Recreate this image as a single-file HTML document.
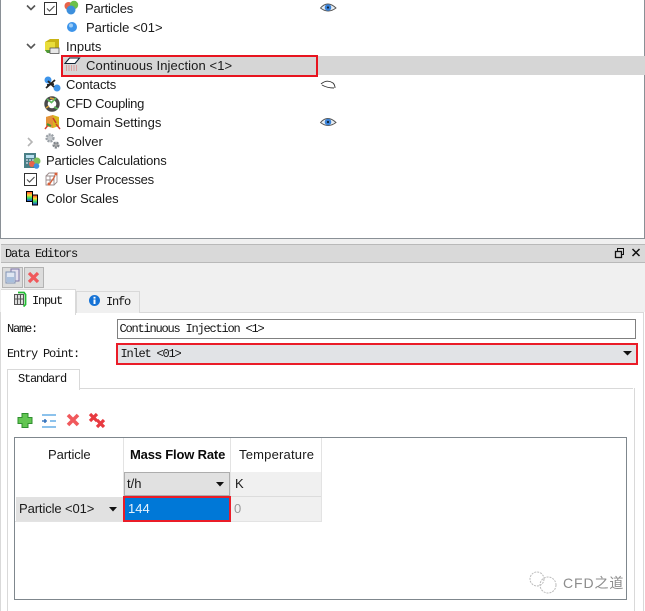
<!DOCTYPE html>
<html><head><meta charset="utf-8"><style>
html,body{margin:0;padding:0;background:#fff}
#r{position:relative;width:645px;height:611px;overflow:hidden;background:#fff;font-family:"Liberation Sans","Noto Sans CJK SC",sans-serif;font-size:13px;color:#1a1a1a}
#r div,#r svg{position:absolute}
.t{white-space:nowrap;line-height:16px}
.m{white-space:nowrap;line-height:14px;font-family:"Liberation Mono","Noto Sans CJK SC",monospace;font-size:12px;letter-spacing:-1.2px;color:#111}
</style></head><body><div id="r">
<!-- tree panel -->
<div style="left:0;top:0;width:1px;height:239px;background:#8a9096"></div>
<div style="left:0;top:238px;width:645px;height:1px;background:#8a9096"></div>
<div style="left:644px;top:0;width:1px;height:239px;background:#8a9096"></div>
<div style="left:62px;top:56px;width:583px;height:19px;background:#d6d6d6"></div>
<div style="left:61px;top:55px;width:253px;height:18px;border:2px solid #e8141f"></div>

<svg style="left:0;top:0" width="345" height="210" viewBox="0 0 345 210">
<defs><linearGradient id="g" x1="0" y1="0" x2="0" y2="1"><stop offset="0" stop-color="#f33"/><stop offset=".35" stop-color="#fd3"/><stop offset=".65" stop-color="#3d6"/><stop offset="1" stop-color="#23e"/></linearGradient></defs>
<g fill="none" stroke="#555" stroke-width="1.600">
<path d="M27 5.500l4 4 4-4M27 44l4 4 4-4"/>
</g>
<path d="M28 138l4 4-4 4" fill="none" stroke="#b5b5b5" stroke-width="1.600"/>
<rect x="44.500" y="2.500" width="12" height="12" fill="#fff" stroke="#333"/>
<path d="M47 8.500l2.500 2.500 5-5" fill="none" stroke="#555" stroke-width="1.200"/>
<rect x="24.500" y="173.500" width="12" height="12" fill="#fff" stroke="#333"/>
<path d="M27 179.500l2.500 2.500 5-5" fill="none" stroke="#555" stroke-width="1.200"/>
<!-- Particles -->
<circle cx="68.500" cy="6" r="4" fill="#e8634a"/>
<circle cx="74" cy="5" r="4.200" fill="#6cc04a"/><circle cx="71" cy="10" r="4.500" fill="#3d8fdc"/>
<circle cx="72" cy="27" r="5" fill="#3d94ea"/><circle cx="71" cy="25.500" r="2" fill="#9ccdf7"/>
<!-- Inputs -->
<path d="M45 42l5-3h9v11h-14z" fill="#c9b414"/><path d="M45 42h10v9h-10z" fill="#e9dd3a"/>
<path d="M45 50h6v3h-4z" fill="#4f9a35"/><rect x="50" y="48" width="9" height="5.500" fill="#e8e8e8" stroke="#555" stroke-width=".8"/>
<!-- injection -->
<path d="M65 63.500l4.500-5.500h10l-4.500 5.500z" fill="#fff" stroke="#123" stroke-width="1.100"/>
<path d="M66 66h11M66 68h11M66 70h11" stroke="#d66" stroke-width="1" stroke-dasharray="1 1.500"/>
<!-- Contacts -->
<circle cx="48" cy="80" r="3.500" fill="#3d94ea"/><circle cx="57" cy="88" r="3.500" fill="#3d94ea"/>
<path d="M46 88l9-8M48 81l6 6M47 85l7-1" stroke="#222" stroke-width="1.800" fill="none"/>
<!-- CFD -->
<circle cx="52" cy="104" r="6" fill="none" stroke="#4a4a4a" stroke-width="3.400"/>
<path d="M47 99l5 4M54 107l4 2M56 98l-5 5" stroke="#5cb85c" stroke-width="1.600" fill="none"/>
<path d="M46 108l3-2M50 98l4 1" stroke="#d9a23b" stroke-width="1.500" fill="none"/>
<!-- Domain -->
<path d="M46 117l7-2 6 2v9l-6 2-7-2z" fill="#d7b71e"/><path d="M53 115v13l-7-2v-9z" fill="#e4923a"/>
<path d="M45 129l4-5M60 129l-4-5" stroke="#d6402f" stroke-width="1.500"/><path d="M47 124l4 2" stroke="#3c9a3c" stroke-width="2"/><path d="M53 118l3 5" stroke="#c83a2a" stroke-width="1.500"/>
<!-- Solver -->
<circle cx="50" cy="138" r="3.500" fill="#c4c8cc" stroke="#9aa0a6" stroke-width="2.200" stroke-dasharray="2 1"/>
<circle cx="56" cy="145" r="2.500" fill="#aaa" stroke="#7f858b" stroke-width="2.200" stroke-dasharray="2 1"/>
<!-- Calc -->
<rect x="24" y="153" width="12" height="15" fill="#4a7f86"/><rect x="26" y="155" width="8" height="3" fill="#b8dff0"/>
<path d="M26 160h8M26 163h8" stroke="#dde" stroke-width="1.200" stroke-dasharray="2 1"/>
<circle cx="37" cy="161" r="3.500" fill="#7cc05a"/><circle cx="32" cy="164" r="3" fill="#e8634a"/><circle cx="36.500" cy="166" r="2.800" fill="#3d8fdc"/>
<!-- User -->
<g fill="none" stroke="#9a8a8a" stroke-width=".9"><path d="M46 176h8v9h-8zM46 176l3-3h8l-3 3M54 185l3-3v-9M50 176v9M46 180h8"/></g>
<path d="M49 185l6-9" stroke="#d8603a" stroke-width="1.200"/><circle cx="56" cy="174" r="1.500" fill="#d8603a"/><circle cx="49" cy="184" r="1.500" fill="#d8603a"/>
<!-- Color scales -->
<rect x="26.500" y="191.500" width="6" height="10" fill="url(#g)" stroke="#000" stroke-width="1"/>
<rect x="32.500" y="195" width="5" height="10" fill="url(#g)" stroke="#000" stroke-width="1"/>
<!-- eyes -->
<path d="M320.500 8q7-8 15.500 0-8 6-15.500 0z" fill="#e8eef2" stroke="#555" stroke-width=".9"/><circle cx="328" cy="7.500" r="3.300" fill="#3a82d8"/><circle cx="328" cy="7.500" r="1.100" fill="#123"/>
<path d="M320.500 122.500q7-8 15.500 0-8 6-15.500 0z" fill="#e8eef2" stroke="#555" stroke-width=".9"/><circle cx="328" cy="122" r="3.300" fill="#3a82d8"/><circle cx="328" cy="122" r="1.100" fill="#123"/>
<path d="M321 84q6-5 12-1 2 2 2 5M322 85q5 3 12 3" fill="none" stroke="#333" stroke-width=".9"/>
</svg>

<div class="t" style="left:85px;top:1px;letter-spacing:-.2px">Particles</div>
<div class="t" style="left:86px;top:20px">Particle &lt;01&gt;</div>
<div class="t" style="left:66px;top:39px">Inputs</div>
<div class="t" style="left:86px;top:58px;letter-spacing:.1px">Continuous Injection &lt;1&gt;</div>
<div class="t" style="left:66px;top:77px;letter-spacing:-.15px">Contacts</div>
<div class="t" style="left:66px;top:96px;letter-spacing:-.3px">CFD Coupling</div>
<div class="t" style="left:66px;top:115px">Domain Settings</div>
<div class="t" style="left:66px;top:134px">Solver</div>
<div class="t" style="left:46px;top:153px;letter-spacing:-.17px">Particles Calculations</div>
<div class="t" style="left:65px;top:172px;letter-spacing:-.2px">User Processes</div>
<div class="t" style="left:46px;top:191px;letter-spacing:-.1px">Color Scales</div>

<!-- Data editors -->
<div style="left:0;top:239px;width:645px;height:73px;background:#f0f0f0"></div>
<div style="left:1px;top:244px;width:644px;height:17px;background:#d9d9d9;border-top:1px solid #b9b9b9;border-bottom:1px solid #b9b9b9"></div>
<div class="m" style="left:5px;top:247px">Data Editors</div>
<svg style="left:612px;top:245px" width="33" height="16"><rect x="5.500" y="3.500" width="6" height="6" fill="none" stroke="#111"/><rect x="3.500" y="6.500" width="6" height="6" fill="#d9d9d9" stroke="#111" stroke-width="1.300"/><path d="M20.500 4l7 7M27.500 4l-7 7" stroke="#111" stroke-width="1.500"/></svg>
<div style="left:2px;top:267px;width:19px;height:19px;background:#dcdcdc;border:1px solid #b3b3b3"></div>
<div style="left:24px;top:267px;width:18px;height:19px;background:#dcdcdc;border:1px solid #b3b3b3"></div>
<svg style="left:0;top:264px" width="50" height="26"><rect x="11" y="5" width="8" height="12" fill="#e4e0ee" stroke="#7d74a6"/><rect x="6" y="8" width="9" height="11" fill="#dfe6f2" stroke="#8094b5"/><rect x="7" y="13" width="7" height="5" fill="#a9bfdc"/><path d="M29 9l9 9M38 9l-9 9" stroke="#f0595c" stroke-width="3.200"/></svg>

<!-- tabs -->
<div style="left:0;top:312px;width:643px;height:1px;background:#d9d9d9"></div>
<div style="left:643px;top:312px;width:1px;height:299px;background:#d9d9d9"></div>
<div style="left:0;top:312px;width:1px;height:299px;background:#d9d9d9"></div>
<div style="left:76px;top:291px;width:62px;height:21px;background:#f0f0f0;border:1px solid #d9d9d9;border-bottom:none"></div>
<div style="left:1px;top:289px;width:74px;height:25px;background:#fff;border-top:1px solid #d9d9d9;border-right:1px solid #d9d9d9"></div>
<svg style="left:12px;top:291px" width="16" height="18"><rect x="2.500" y="3.500" width="9" height="10" fill="#ddd" stroke="#555"/><path d="M5.500 3.500v10M8.500 3.500v10M2.500 8h9" stroke="#555"/><path d="M6 1.500h6l1.500 2v10l-2 2" fill="none" stroke="#22bb33" stroke-width="1.800"/></svg>
<div class="m" style="left:32px;top:294px">Input</div>
<svg style="left:88px;top:294px" width="14" height="14"><circle cx="6.500" cy="6.500" r="5.500" fill="#1673d6"/><rect x="5.500" y="5.500" width="2" height="4.500" fill="#fff"/><rect x="5.500" y="2.800" width="2" height="1.800" fill="#fff"/></svg>
<div class="m" style="left:106px;top:295px">Info</div>

<div class="m" style="left:7px;top:322px">Name:</div>
<div style="left:117px;top:319px;width:517px;height:18px;border:1px solid #808080;background:#fff"></div>
<div class="m" style="left:119.500px;top:322px">Continuous Injection &lt;1&gt;</div>
<div class="m" style="left:7px;top:347px">Entry Point:</div>
<div style="left:116px;top:343px;width:518px;height:18px;border:2px solid #ea1c28;background:#e1e3e6"></div>
<div class="m" style="left:120.500px;top:347px">Inlet &lt;01&gt;</div>
<svg style="left:620px;top:348px" width="14" height="12"><path d="M3 3h9l-4.500 4.500z" fill="#111"/></svg>

<!-- Standard -->
<div style="left:7px;top:388px;width:626px;height:1px;background:#d9d9d9"></div>
<div style="left:7px;top:369px;width:71px;height:20px;background:#fff;border:1px solid #d9d9d9;border-bottom:none"></div>
<div class="m" style="left:18px;top:372px">Standard</div>
<div style="left:7px;top:388px;width:1px;height:223px;background:#d9d9d9"></div>
<div style="left:634px;top:388px;width:1px;height:223px;background:#d9d9d9"></div>

<!-- toolbar icons -->
<svg style="left:14px;top:408px" width="100" height="26">
<path d="M8 5.500h6v4h4v6h-4v4H8v-4H4v-6h4z" fill="#62c652" stroke="#2f8f2f"/>
<path d="M28 7h14M28 19h14" stroke="#8cc2ec" stroke-width="2"/><path d="M36 13h6" stroke="#8cc2ec" stroke-width="2"/><path d="M28 13h5M31 11v4" stroke="#1b62b5" stroke-width="1.300"/>
<path d="M54 7l10 10M64 7l-10 10" stroke="#f0595c" stroke-width="3.600"/>
<path d="M76 6l7 7M83 6l-7 7" stroke="#e83a40" stroke-width="3.200"/><path d="M83 12l7 7M90 12l-7 7" stroke="#e83a40" stroke-width="3.200"/>
</svg>

<!-- table -->
<div style="left:14px;top:437px;width:611px;height:161px;border:1px solid #7f878d;background:#fff"></div>
<div style="left:123px;top:438px;width:1px;height:84px;background:#e3e3e3"></div>
<div style="left:230px;top:438px;width:1px;height:84px;background:#e3e3e3"></div>
<div style="left:321px;top:438px;width:1px;height:84px;background:#e3e3e3"></div>
<div style="left:15px;top:521px;width:307px;height:1px;background:#e3e3e3"></div>
<div style="left:231px;top:472px;width:90px;height:24px;background:#f0f0f0"></div>
<div style="left:231px;top:496px;width:90px;height:1px;background:#dcdcdc"></div>
<div style="left:231px;top:497px;width:90px;height:24px;background:#f0f0f0"></div>
<div style="left:124px;top:472px;width:106px;height:24px;background:#e1e1e1;border:1px solid #adadad;box-sizing:border-box"></div>
<div style="left:16px;top:497px;width:107px;height:24px;background:#e1e1e1"></div>
<div style="left:123px;top:496px;width:104px;height:22px;border:2px solid #ea1c28;background:#0078d7"></div>

<div class="t" style="left:48px;top:447px;letter-spacing:-.1px">Particle</div>
<div class="t" style="left:130px;top:447px;font-weight:bold;letter-spacing:-.17px;color:#0a0a0a">Mass Flow Rate</div>
<div class="t" style="left:239px;top:447px;letter-spacing:.2px">Temperature</div>
<div class="t" style="left:127px;top:476px">t/h</div>
<div class="t" style="left:235px;top:476px">K</div>
<div class="t" style="left:19px;top:501px;letter-spacing:-.1px">Particle &lt;01&gt;</div>
<div class="t" style="left:128px;top:501px;color:#e8f3fc">144</div>
<div class="t" style="left:234px;top:501px;color:#999">0</div>
<svg style="left:105px;top:478px" width="120" height="35"><path d="M111 4h8l-4 4.500zM4 29h8l-4 4.500z" fill="#111"/></svg>

<!-- watermark -->
<svg style="left:528px;top:570px" width="34" height="28" fill="none" stroke="#bbb" stroke-width="1" stroke-dasharray="2 1"><circle cx="9" cy="9" r="7"/><circle cx="20" cy="15" r="8"/></svg>
<div class="t" style="left:563px;top:575px;font-size:14px;color:#8c8c8c;letter-spacing:.9px">CFD之道</div>
</div></body></html>
